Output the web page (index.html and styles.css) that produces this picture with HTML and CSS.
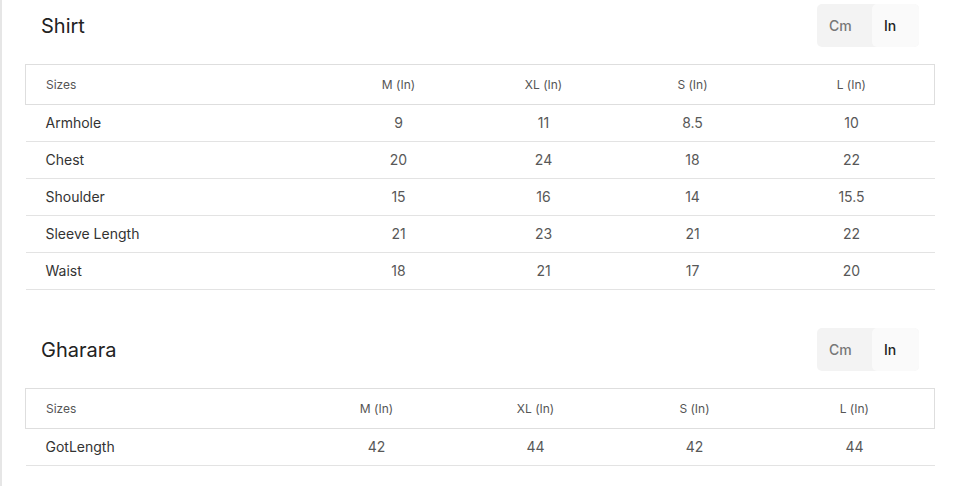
FILE: index.html
```html
<!DOCTYPE html>
<html lang="en">
<head>
<meta charset="utf-8">
<title>Size chart</title>
<link rel="stylesheet" href="styles.css">
</head>
<body>
<div class="panel">
  <section class="chart">
    <div class="chart-head">
      <h2 class="chart-title">Shirt</h2>
      <div class="unit-toggle">
        <button class="unit unit-cm">Cm</button>
        <button class="unit unit-in active">In</button>
      </div>
    </div>
    <table class="size-table shirt-table">
      <colgroup>
        <col class="c-label"><col class="c-m"><col class="c-xl"><col class="c-s"><col class="c-l">
      </colgroup>
      <thead>
        <tr><th>Sizes</th><th>M (In)</th><th>XL (In)</th><th>S (In)</th><th>L (In)</th></tr>
      </thead>
      <tbody>
        <tr><td>Armhole</td><td>9</td><td>11</td><td>8.5</td><td>10</td></tr>
        <tr><td>Chest</td><td>20</td><td>24</td><td>18</td><td>22</td></tr>
        <tr><td>Shoulder</td><td>15</td><td>16</td><td>14</td><td>15.5</td></tr>
        <tr><td>Sleeve Length</td><td>21</td><td>23</td><td>21</td><td>22</td></tr>
        <tr><td>Waist</td><td>18</td><td>21</td><td>17</td><td>20</td></tr>
      </tbody>
    </table>
  </section>
  <section class="chart">
    <div class="chart-head">
      <h2 class="chart-title">Gharara</h2>
      <div class="unit-toggle">
        <button class="unit unit-cm">Cm</button>
        <button class="unit unit-in active">In</button>
      </div>
    </div>
    <table class="size-table gharara-table">
      <colgroup>
        <col class="c-label"><col class="c-m"><col class="c-xl"><col class="c-s"><col class="c-l">
      </colgroup>
      <thead>
        <tr><th>Sizes</th><th>M (In)</th><th>XL (In)</th><th>S (In)</th><th>L (In)</th></tr>
      </thead>
      <tbody>
        <tr><td>GotLength</td><td>42</td><td>44</td><td>42</td><td>44</td></tr>
      </tbody>
    </table>
  </section>
</div>
</body>
</html>
```
FILE: styles.css
```css
* { box-sizing: border-box; }
html, body { margin: 0; padding: 0; background: #fff; }
body {
  font-family: Inter, "Noto Sans", sans-serif;
  color: #333;
}
.panel {
  border-left: 2px solid #e6e6e6;
  padding: 4px 18px 0 23px;
  height: 486px;
  overflow: hidden;
}
.chart { margin-bottom: 38px; }
.chart-head {
  display: flex;
  justify-content: space-between;
  align-items: center;
  height: 43px;
  padding: 0 16px 0 16px;
  margin-bottom: 17px;
}
.chart-title {
  margin: 0;
  font-size: 20px;
  font-weight: 400;
  color: #222;
}
.unit-toggle {
  display: flex;
  height: 43px;
  background: #f3f3f3;
  border-radius: 5px;
}
.unit {
  font-family: inherit;
  font-size: 14px;
  font-weight: 500;
  border: 0;
  background: transparent;
  padding: 0 0 0 12px;
  text-align: left;
  border-radius: 5px;
  cursor: pointer;
}
.unit-cm { width: 55px; color: #777; }
.unit-in { width: 47px; color: #222; }
.unit.active { background: #fafafa; }
.size-table {
  width: 100%;
  border-collapse: collapse;
  table-layout: fixed;
}
.shirt-table .c-label { width: 301px; }
.shirt-table .c-m { width: 144px; }
.shirt-table .c-xl { width: 146px; }
.shirt-table .c-s { width: 152px; }
.shirt-table .c-l { width: 166px; }
.gharara-table .c-label { width: 271px; }
.gharara-table .c-m { width: 160px; }
.gharara-table .c-xl { width: 158px; }
.gharara-table .c-s { width: 160px; }
.gharara-table .c-l { width: 160px; }
.size-table th {
  height: 40px;
  font-size: 12px;
  font-weight: 400;
  color: #555;
  text-align: center;
  border-top: 1px solid #dedede;
  border-bottom: 1px solid #dedede;
  padding: 0;
}
.size-table th:first-child { border-left: 1px solid #dedede; }
.size-table th:last-child { border-right: 1px solid #dedede; }
.size-table td {
  height: 37px;
  font-size: 14px;
  color: #585858;
  text-align: center;
  border-bottom: 1px solid #e3e3e3;
  padding: 0 0 1px;
}
.size-table th:first-child,
.size-table td:first-child {
  text-align: left;
  padding-left: 20px;
}
.size-table td:first-child { color: #333; }
```
